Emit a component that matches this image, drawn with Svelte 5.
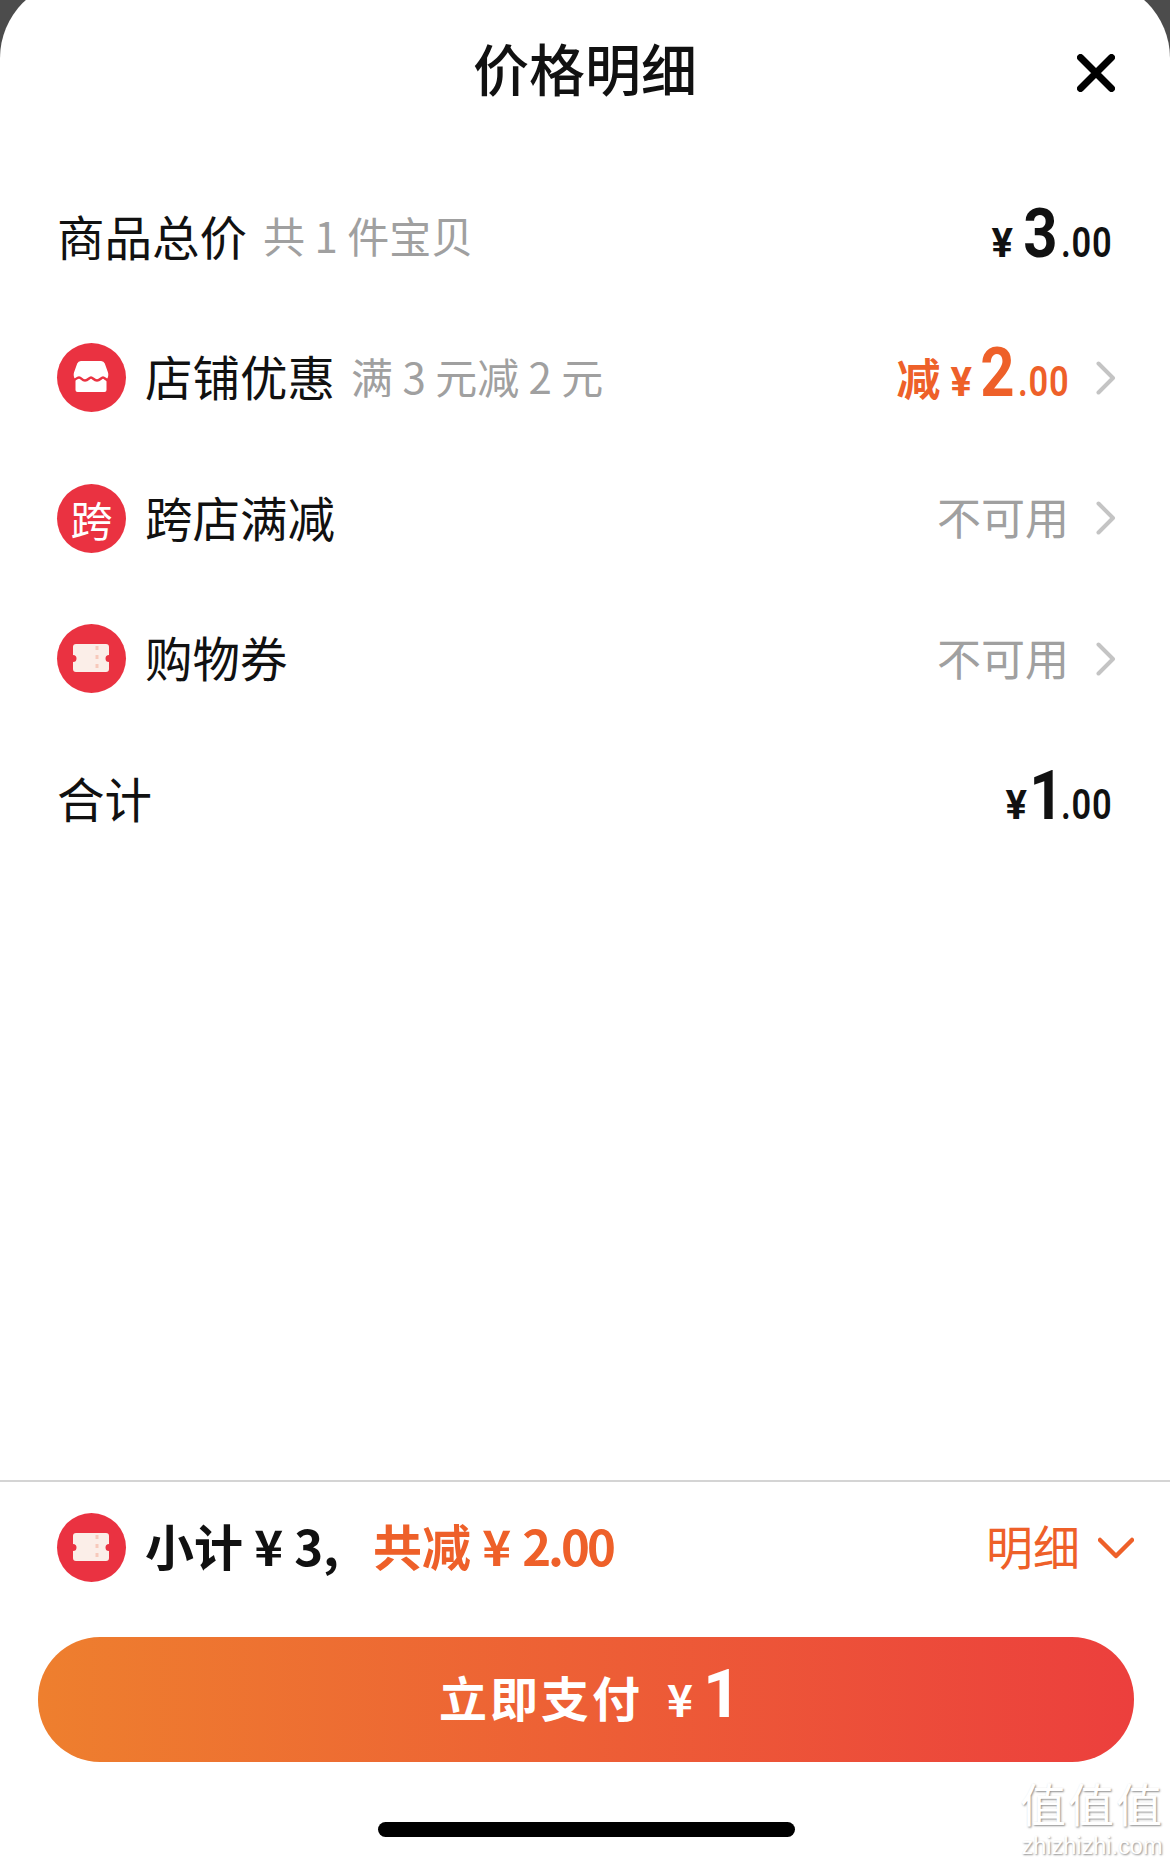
<script>
  const rows = [
    { icon: 'shop', label: '店铺优惠', note: '满 3 元减 2 元', deal: true },
    { icon: 'cross', label: '跨店满减', off: '不可用' },
    { icon: 'ticket', label: '购物券', off: '不可用' }
  ];
</script>

{#snippet ticket()}
  <span class="badge">
    <svg viewBox="0 0 69 69" width="69" height="69">
      <path d="M19 20h30a3 3 0 0 1 3 3v8a3.500 3.500 0 0 0 0 7v7a3 3 0 0 1-3 3H19a3 3 0 0 1-3-3v-7a3.500 3.500 0 0 0 0-7v-8a3 3 0 0 1 3-3z" fill="#fbeee8" />
      <path d="M40 22v25" stroke="#f7c9bb" stroke-width="3" stroke-dasharray="4 5" fill="none" />
    </svg>
  </span>
{/snippet}

{#snippet shop()}
  <span class="badge">
    <svg viewBox="0 0 69 69" width="69" height="69">
      <path d="M24 18h20a4 4 0 0 1 3.800 2.500l3.200 9c1 3.500-.5 7-3 8H20c-2.500-1-4-4.500-3-8l3.200-9A4 4 0 0 1 24 18z" fill="#fff" />
      <path d="M18.500 36h31v11a2 2 0 0 1-2 2h-27a2 2 0 0 1-2-2z" fill="#fff" />
      <path d="M15 37.500c3.200 0 4.500-3 7-3s2.800 3 6 3 4-3 6-3 2.800 3 6 3 4-3 6-3 2.800 3 6 3" fill="none" stroke="#ea3241" stroke-width="2.400" />
    </svg>
  </span>
{/snippet}

{#snippet chevron()}
  <svg class="chevron" viewBox="0 0 20 34" width="20" height="34">
    <path d="M2.500 2.500 17 17 2.500 31.500" fill="none" stroke="#c4c4c4" stroke-width="4" stroke-linecap="round" stroke-linejoin="round" />
  </svg>
{/snippet}

<div class="page">
  <section class="sheet">
    <header class="head">
      <h1>价格明细</h1>
      <svg class="close" viewBox="0 0 38 38" width="38" height="38">
        <path d="M3.500 3.500 34.500 34.500M34.500 3.500 3.500 34.500" stroke="#000" stroke-width="7" stroke-linecap="round" fill="none" />
      </svg>
    </header>

    <div class="rows">
      <div class="row">
        <span class="label">商品总价</span>
        <span class="note">共 1 件宝贝</span>
        <span class="price"><i class="yen">¥</i><b>3</b><i class="cents">.00</i></span>
      </div>

      {#each rows as row}
        <div class="row">
          {#if row.icon === 'shop'}
            {@render shop()}
          {:else if row.icon === 'cross'}
            <span class="badge text">跨</span>
          {:else}
            {@render ticket()}
          {/if}
          <span class="label">{row.label}</span>
          {#if row.note}<span class="note">{row.note}</span>{/if}
          {#if row.deal}
            <span class="price orange"><em>减</em><i class="yen">¥</i><b>2</b><i class="cents">.00</i></span>
          {:else}
            <span class="off">{row.off}</span>
          {/if}
          {@render chevron()}
        </div>
      {/each}

      <div class="row">
        <span class="label">合计</span>
        <span class="price"><i class="yen">¥</i><b class="one">1</b><i class="cents">.00</i></span>
      </div>
    </div>

    <footer class="foot">
      <div class="summary">
        {@render ticket()}
        <span class="total">小计 <i>¥</i> <i>3</i>,</span>
        <span class="saved">共减 <i>¥</i> <i class="amount">2.00</i></span>
        <span class="toggle">明细</span>
        <svg class="down" viewBox="0 0 36 22" width="36" height="22">
          <path d="M2 3 18 19 34 3" fill="none" stroke="#ee6029" stroke-width="4.500" stroke-linecap="round" stroke-linejoin="round" />
        </svg>
      </div>
      <button class="pay"><span>立即支付</span><i class="yen">¥</i><b>1</b></button>
      <div class="home"></div>
    </footer>

    <div class="mark"><span>值值值</span><small>zhizhizhi.com</small></div>
  </section>
</div>

<style>
  :global(body) {
    margin: 0;
    background: #4c4c4c;
  }

  .page {
    width: 1170px;
    height: 1861px;
    font-family: "Noto Sans CJK SC", "Noto Sans", sans-serif;
    color: #111;
    overflow: hidden;
  }

  /* the sheet's top edge sits just above the visible area */
  .sheet {
    position: relative;
    display: flex;
    flex-direction: column;
    height: 1881px;
    margin-top: -20px;
    background: #fff;
    border-radius: 78px 78px 0 0;
  }

  .head {
    display: flex;
    justify-content: center;
    align-items: center;
    position: relative;
    height: 164px;
    padding-top: 10px;
    box-sizing: border-box;
  }

  h1 {
    margin: 0;
    font-size: 56px;
    font-weight: 500;
    line-height: 1;
  }

  .close {
    position: absolute;
    right: 55px;
    top: 74px;
  }

  .rows {
    display: flex;
    flex-direction: column;
    padding: 23px 54px 0 57px;
    flex: 1;
  }

  .row {
    display: flex;
    align-items: center;
    height: 140.500px;
  }

  .badge {
    display: flex;
    align-items: center;
    justify-content: center;
    flex: none;
    width: 69px;
    height: 69px;
    border-radius: 50%;
    background: #ea3241;
    margin-right: 19px;
  }

  .badge.text {
    color: #fff;
    font-size: 42px;
  }

  .label {
    font-size: 47.500px;
    line-height: 1;
    margin-top: -4px;
  }

  .note {
    margin-left: 16px;
    font-size: 42px;
    line-height: 1;
    color: #a0a0a0;
    margin-top: -4px;
  }

  .price {
    display: flex;
    align-items: baseline;
    margin-left: auto;
    margin-top: -7px;
    font-family: "Roboto", sans-serif;
  }

  .price .yen {
    font-style: normal;
    font-size: 40px;
    margin-right: 10px;
    font-weight: 700;
  }

  /* digits are narrower than Roboto's own */
  .price b {
    display: inline-block;
    font-size: 68px;
    line-height: 1;
    font-weight: 700;
    transform: scaleX(.88);
    margin: 0 -2px;
  }

  .price b.one {
    margin: 0 -8px 0 -10px;
  }

  .price .cents {
    display: inline-block;
    font-style: normal;
    font-size: 42px;
    font-weight: 600;
    transform: scaleX(.82);
    margin: 0 -8px 0 3px;
    letter-spacing: 1px;
    transform-origin: left;
  }

  .price em {
    font-style: normal;
    font-family: "Noto Sans CJK SC", sans-serif;
    font-size: 44px;
    font-weight: 700;
    margin-right: 10px;
  }

  .orange {
    color: #ee6029;
    margin-right: -2px;
  }

  .price.orange .yen {
    margin-right: 8px;
  }

  .off {
    margin-left: auto;
    margin-right: 2px;
    font-size: 44px;
    line-height: 1;
    color: #a0a0a0;
    margin-top: -4px;
  }

  .chevron {
    margin-left: 25px;
    flex: none;
  }

  .foot {
    border-top: 2px solid #d4d4d4;
    padding: 0 36px 0 38px;
  }

  .summary {
    display: flex;
    align-items: center;
    height: 155px;
    padding: 0 0 24px 19px;
    box-sizing: border-box;
  }

  .total,
  .saved {
    font-size: 49px;
    font-weight: 700;
    line-height: 1;
    margin-top: -6px;
    white-space: pre;
  }

  .total i,
  .saved i {
    font-style: normal;
  }

  .saved {
    margin-left: 34px;
    color: #ee6029;
  }

  .saved .amount {
    letter-spacing: -3px;
  }

  .toggle {
    margin-left: auto;
    font-size: 47px;
    line-height: 1;
    color: #ee6029;
    margin-top: -6px;
  }

  .down {
    margin-left: 18px;
  }

  .pay {
    display: flex;
    align-items: baseline;
    justify-content: center;
    width: 100%;
    height: 125px;
    border: none;
    border-radius: 62px;
    background: linear-gradient(90deg, #ee7f2e, #ec3f3d);
    color: #fff;
    font-family: "Noto Sans CJK SC", sans-serif;
    padding: 24px 0 0 8px;
  }

  .pay span {
    font-size: 48px;
    font-weight: 700;
    letter-spacing: 3px;
  }

  .pay .yen {
    font-style: normal;
    font-size: 44px;
    font-weight: 700;
    margin: 0 10px 0 24px;
  }

  .pay b {
    font-family: "Roboto", sans-serif;
    font-size: 66px;
    line-height: 1;
    font-weight: 700;
  }

  .home {
    width: 417px;
    height: 15px;
    margin: 60px auto 24px;
    border-radius: 8px;
    background: #000;
  }

  .mark {
    position: absolute;
    right: 6px;
    bottom: 3px;
    display: flex;
    flex-direction: column;
    align-items: center;
    gap: 10px;
    color: #fff;
    text-shadow: 1px 1px 2px #8e8e8e;
    line-height: 1;
  }

  .mark span {
    font-size: 46px;
    letter-spacing: 2px;
  }

  .mark small {
    font-family: "Liberation Sans", sans-serif;
    font-size: 23.500px;
  }
</style>
